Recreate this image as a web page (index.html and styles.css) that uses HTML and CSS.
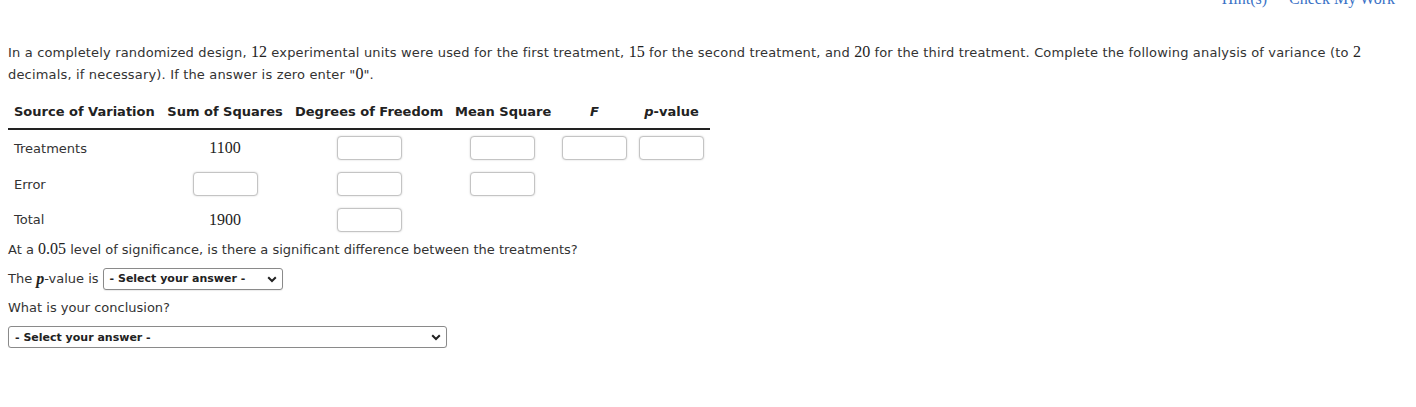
FILE: index.html
```html
<!DOCTYPE html>
<html lang="en">
<head>
<meta charset="utf-8">
<title>ANOVA</title>
<link rel="stylesheet" href="styles.css">
</head>
<body>
<div class="toolbar">
  <a class="tool-link">Hint(s)</a>
  <a class="tool-link">Check My Work</a>
</div>
<div class="content">
  <p class="question">In a completely randomized design, <span class="math">12</span> experimental units were used for the first treatment, <span class="math">15</span> for the second treatment, and <span class="math">20</span> for the third treatment. Complete the following analysis of variance (to <span class="math">2</span> decimals, if necessary). If the answer is zero enter "<span class="math">0</span>".</p>

  <table class="anova">
    <colgroup>
      <col class="c-src"><col class="c-ss"><col class="c-df"><col class="c-ms"><col class="c-f"><col class="c-p">
    </colgroup>
    <thead>
      <tr>
        <th class="left">Source of Variation</th>
        <th>Sum of Squares</th>
        <th>Degrees of Freedom</th>
        <th>Mean Square</th>
        <th><i>F</i></th>
        <th><i>p</i>-value</th>
      </tr>
    </thead>
    <tbody>
      <tr class="r36">
        <td class="left">Treatments</td>
        <td><span class="math">1100</span></td>
        <td><span class="box"></span></td>
        <td><span class="box"></span></td>
        <td><span class="box"></span></td>
        <td><span class="box"></span></td>
      </tr>
      <tr class="r36">
        <td class="left">Error</td>
        <td><span class="box"></span></td>
        <td><span class="box"></span></td>
        <td><span class="box"></span></td>
        <td></td>
        <td></td>
      </tr>
      <tr class="r35">
        <td class="left">Total</td>
        <td><span class="math">1900</span></td>
        <td><span class="box"></span></td>
        <td></td>
        <td></td>
        <td></td>
      </tr>
    </tbody>
  </table>

  <p class="line sig">At a <span class="math">0.05</span> level of significance, is there a significant difference between the treatments?</p>
  <div class="line pval">The <span class="math it">p</span>-value is <div class="select short"><span>- Select your answer -</span><svg class="chev" width="10" height="7" viewBox="0 0 10 7"><path d="M1.2 1.2 L5 5 L8.8 1.2" fill="none" stroke="#222" stroke-width="2"/></svg></div></div>
  <p class="line concl">What is your conclusion?</p>
  <div class="select long"><span>- Select your answer -</span><svg class="chev" width="10" height="7" viewBox="0 0 10 7"><path d="M1.2 1.2 L5 5 L8.8 1.2" fill="none" stroke="#222" stroke-width="2"/></svg></div>
</div>
</body>
</html>
```

FILE: styles.css
```css
html, body {
  margin: 0;
  padding: 0;
  background: #fff;
}
body {
  font-family: "DejaVu Sans", Verdana, sans-serif;
  font-size: 13px;
  color: #333;
}
.toolbar {
  display: flex;
  justify-content: flex-end;
  gap: 22px;
  margin-top: -10px;
  padding-right: 21px;
  height: 18px;
  line-height: 18px;
  font-family: "Liberation Serif", serif;
  font-size: 16px;
}
.tool-link {
  color: #3a72c6;
}
.content {
  padding: 0 8px;
}
.question {
  margin: 34px 0 0;
  line-height: 22px;
  letter-spacing: 0.17px;
}
.math {
  font-family: "Liberation Serif", serif;
  font-size: 16px;
  line-height: 1;
  color: #222;
  letter-spacing: 0;
}
.math.it {
  font-style: italic;
  font-weight: bold;
}
.anova {
  margin-top: 9px;
  border-collapse: collapse;
  table-layout: fixed;
  width: 702px;
}
.c-src { width: 153px; }
.c-ss { width: 128px; }
.c-df { width: 160px; }
.c-ms { width: 107px; }
.c-f { width: 77px; }
.c-p { width: 77px; }
.anova th {
  height: 32px;
  padding: 0 6px 1px;
  font-weight: bold;
  color: #222;
  text-align: center;
  border-bottom: 2px solid #222;
  white-space: nowrap;
}
.anova td {
  padding: 0 6px;
  text-align: center;
  vertical-align: middle;
}
.anova .r36 td {
  height: 36px;
}
.anova .r35 td {
  height: 35px;
}
.anova .left {
  text-align: left;
}
.box {
  display: inline-block;
  vertical-align: middle;
  width: 65px;
  height: 24px;
  box-sizing: border-box;
  border: 1px solid #c4c4c4;
  border-radius: 4px;
  box-shadow: 0 0 2px rgba(0, 0, 0, 0.18);
  background: #fff;
}
.line {
  margin: 0;
  line-height: 22px;
}
.sig {
  margin-top: 2px;
}
.pval {
  display: flex;
  align-items: center;
  gap: 4px;
  margin-top: 7px;
}
.pval .math {
  margin: 0 -4px 0 0;
}
.concl {
  margin-top: 7px;
}
.select {
  display: flex;
  align-items: center;
  justify-content: space-between;
  box-sizing: border-box;
  height: 22px;
  padding: 0 5px 0 6px;
  border: 1px solid #8a8a8a;
  border-radius: 3px;
  box-shadow: 0 1px 1px rgba(0, 0, 0, 0.08);
  font-size: 11px;
  font-weight: bold;
  color: #222;
  background: #fff;
}
.select.short {
  width: 180px;
}
.select.long {
  width: 439px;
  margin-top: 7px;
}
.chev {
  display: block;
}
```
